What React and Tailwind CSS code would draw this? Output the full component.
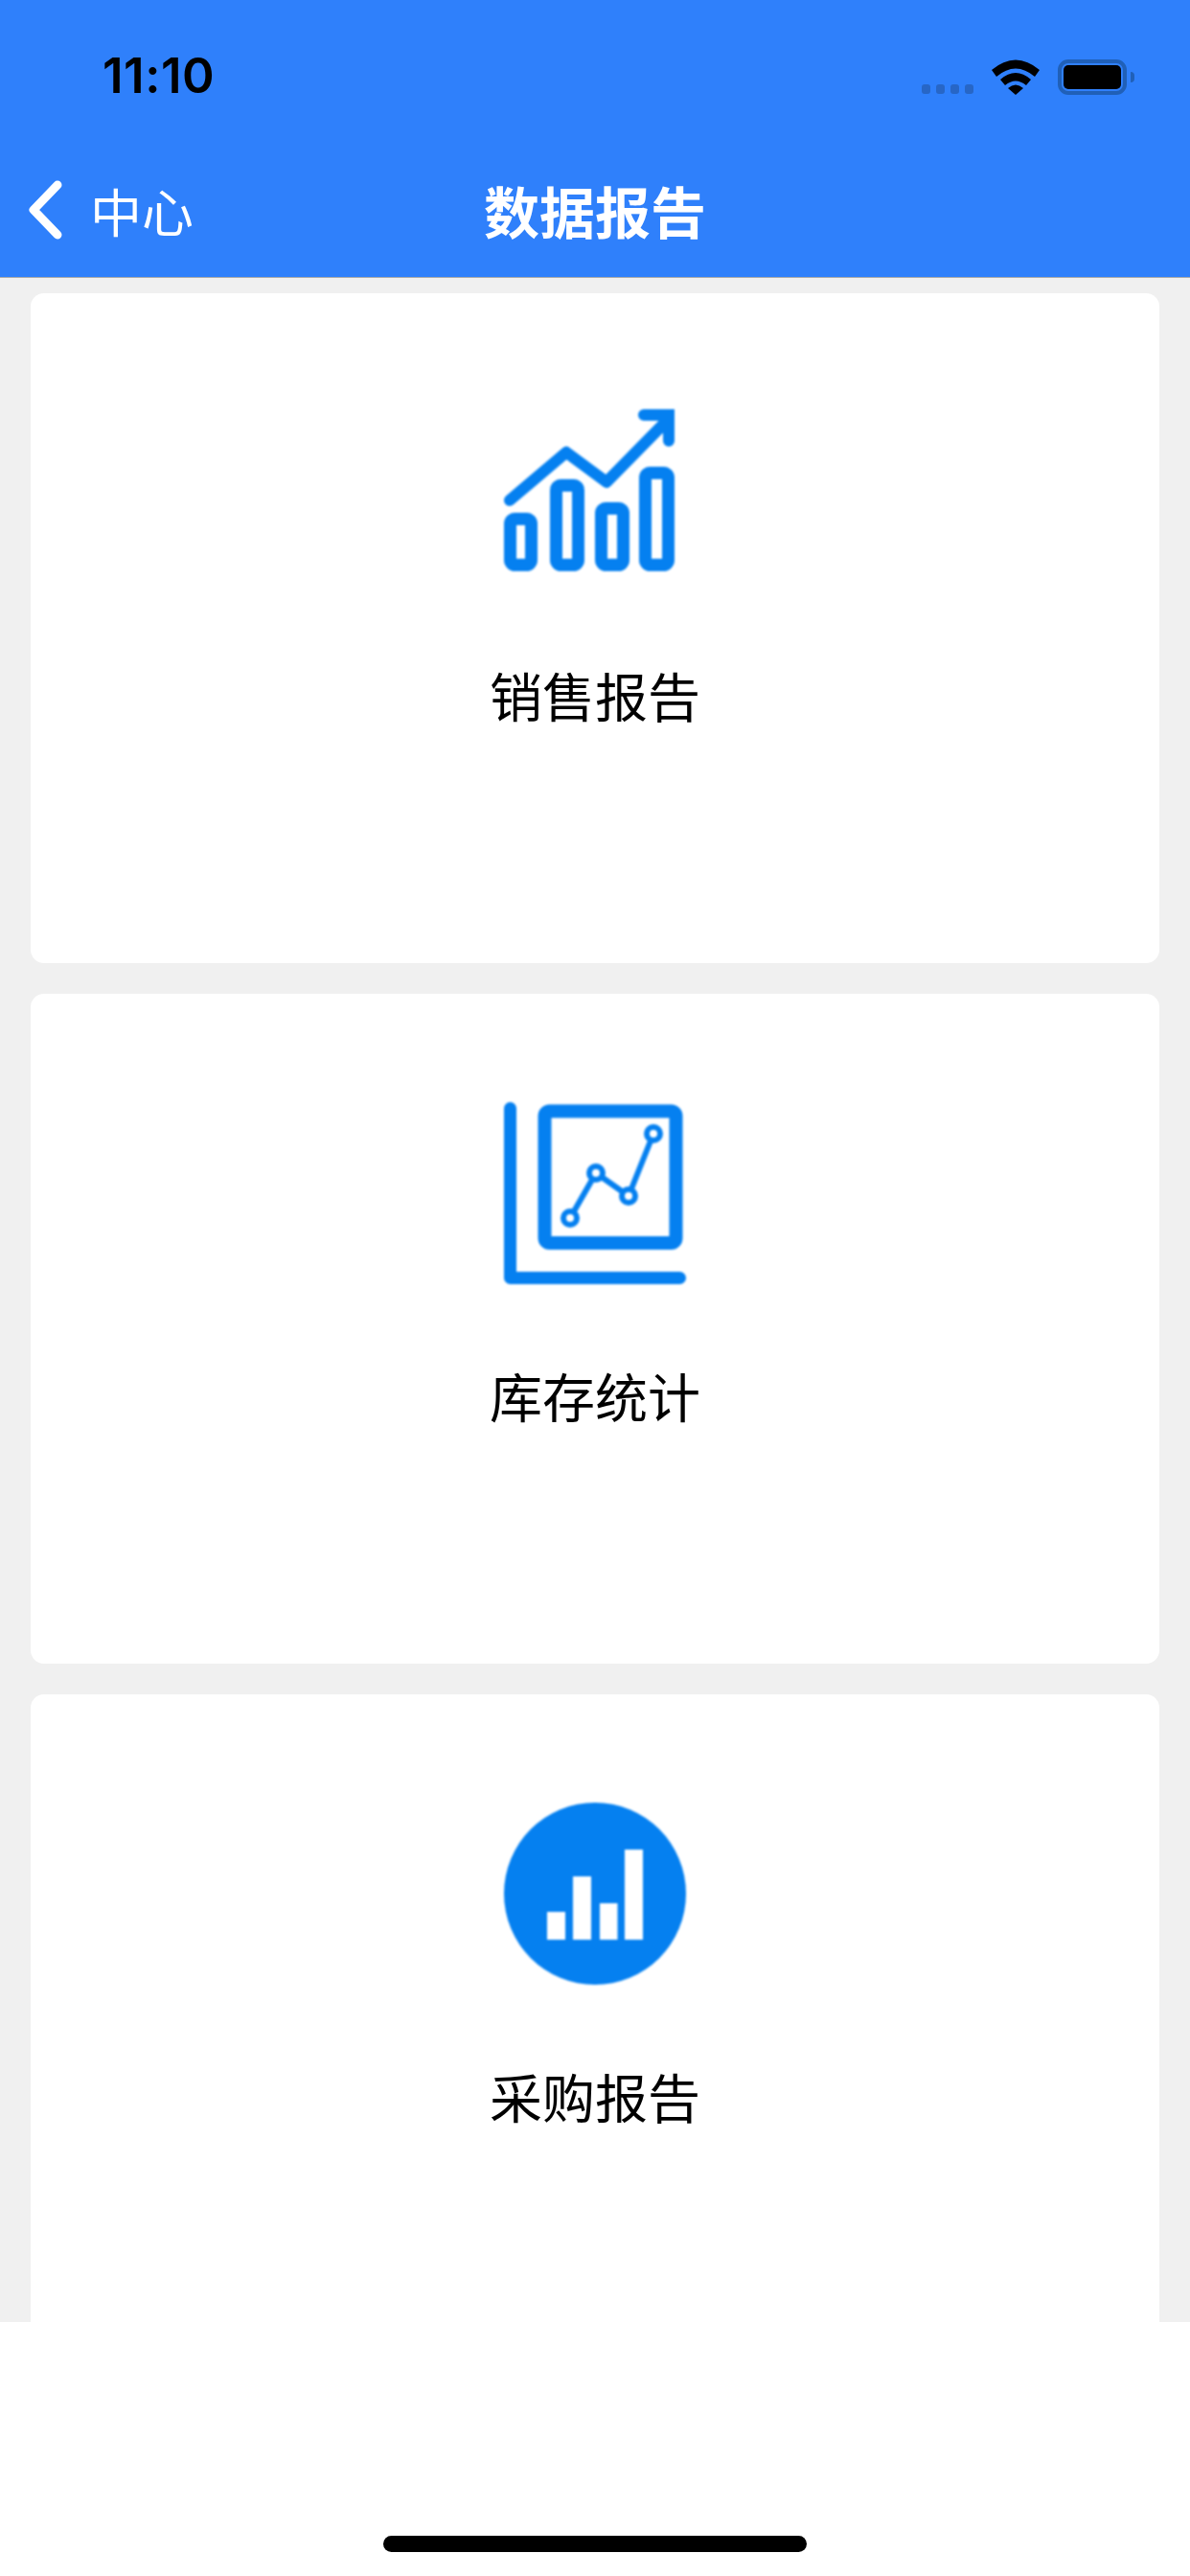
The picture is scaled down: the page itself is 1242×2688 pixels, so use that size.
const FONT = { fontFamily: '"Noto Sans CJK SC", sans-serif' }

function SalesIcon() {
  return (
    <svg width="190" height="190" viewBox="0 0 190 190" fill="none" stroke="#0580f0" strokeLinecap="round" strokeLinejoin="round" className="blur-[0.8px]">
      <rect x="6.5" y="122.5" width="22" height="48" rx="5" strokeWidth="13" />
      <rect x="54.5" y="87.5" width="23" height="83" rx="5" strokeWidth="13" />
      <rect x="101.5" y="111.5" width="23" height="59" rx="5" strokeWidth="13" />
      <rect x="147.5" y="74.5" width="24" height="96" rx="5" strokeWidth="13" />
      <path d="M6 103 L65 53 L107 84 L167 23" strokeWidth="12" />
      <path d="M146 14 H172 V41" strokeWidth="12" strokeLinejoin="miter" />
    </svg>
  )
}

function StockIcon() {
  return (
    <svg width="190" height="190" viewBox="0 0 190 190" fill="none" stroke="#0580f0" strokeLinecap="round" strokeLinejoin="round" className="blur-[0.8px]">
      <path d="M6.5 6.5 V183.5 H183.5" strokeWidth="13" />
      <rect x="42.5" y="9.5" width="137" height="137.5" rx="5" strokeWidth="14" />
      <path d="M69 121 L96 74 L130 98 L156 33" strokeWidth="6" />
      <g fill="#fff" strokeWidth="6">
        <circle cx="69" cy="121" r="7" />
        <circle cx="96" cy="74" r="7" />
        <circle cx="130" cy="98" r="7" />
        <circle cx="156" cy="33" r="7" />
      </g>
    </svg>
  )
}

function PurchaseIcon() {
  return (
    <svg width="190" height="190" viewBox="0 0 190 190" className="blur-[0.8px]">
      <circle cx="95" cy="95" r="95" fill="#0580f0" />
      <g fill="#fff">
        <rect x="45" y="114" width="19" height="29" />
        <rect x="72" y="77" width="19" height="66" />
        <rect x="100" y="105" width="18.5" height="38" />
        <rect x="126" y="49" width="19" height="94" />
      </g>
    </svg>
  )
}

const reports = [
  { name: '销售报告', Icon: SalesIcon },
  { name: '库存统计', Icon: StockIcon },
  { name: '采购报告', Icon: PurchaseIcon },
]

export default function App() {
  return (
    <div className="flex flex-col w-[1242px] h-[2688px] overflow-hidden bg-white" style={FONT}>
      {/* header */}
      <div className="h-[290px] shrink-0 bg-[#2f80fb] border-b border-[#a9a9a9]">
        <div className="flex items-center justify-between h-[158px] pl-[107px] pr-[66px]">
          <span className="text-[51px] font-semibold tracking-[0.5px] text-black" style={{ fontFamily: 'Inter, sans-serif' }}>11:10</span>
          <div className="flex items-end">
            <div className="flex gap-[6px] mb-[1px]">
              <span className="w-[9px] h-[10px] rounded-[3px] bg-[#2766c6]" />
              <span className="w-[9px] h-[10px] rounded-[3px] bg-[#2766c6]" />
              <span className="w-[9px] h-[10px] rounded-[3px] bg-[#2766c6]" />
              <span className="w-[9px] h-[10px] rounded-[3px] bg-[#2766c6]" />
            </div>
            <svg width="52" height="39" viewBox="0 0 52 39" className="ml-[18px]">
              <path d="M1 13 Q26 -8 51 13 L46 20 Q26 3 6 20 Z" fill="#000" />
              <path d="M10 23 Q26 9 42 23 L37 29 Q26 20 15 29 Z" fill="#000" />
              <path d="M18 32 Q26 25 34 32 L26 39 Z" fill="#000" />
            </svg>
            <div className="relative ml-[18px] w-[72px] h-[37px] p-[2px] rounded-[11px] border-[4px] border-[#2060b8]">
              <div className="w-full h-full rounded-[5px] bg-black" />
              <span className="absolute left-[72px] top-[9px] w-[4px] h-[11px] rounded-r-[4px] bg-[#2060b8]" />
            </div>
          </div>
        </div>
        <div className="relative flex items-center justify-center h-[122px]">
          <div className="absolute left-[29px] top-0 flex items-center h-full text-white">
            <svg width="36" height="62" viewBox="0 0 36 62" fill="none" stroke="#fff" strokeWidth="9" strokeLinecap="round" strokeLinejoin="round">
              <path d="M31 5 L6 31 L31 57" />
            </svg>
            <span className="ml-[29px] text-[54px]">中心</span>
          </div>
          <h1 className="text-[58px] font-bold text-white">数据报告</h1>
        </div>
      </div>

      {/* report cards */}
      <div className="flex-1 min-h-0 overflow-hidden bg-[#f0f0f0] px-[32px] pt-[16px]">
        <div className="flex flex-col gap-[32px]">
          {reports.map(({ name, Icon }) => (
            <div key={name} className="flex flex-col items-center shrink-0 h-[699px] pt-[113px] bg-white rounded-[14px]">
              <Icon />
              <p className="mt-[74px] text-[55px] text-black">{name}</p>
            </div>
          ))}
        </div>
      </div>

      {/* home indicator */}
      <div className="flex justify-center shrink-0 h-[265px] pt-[223px] bg-white">
        <div className="w-[442px] h-[17px] rounded-full bg-black" />
      </div>
    </div>
  )
}
